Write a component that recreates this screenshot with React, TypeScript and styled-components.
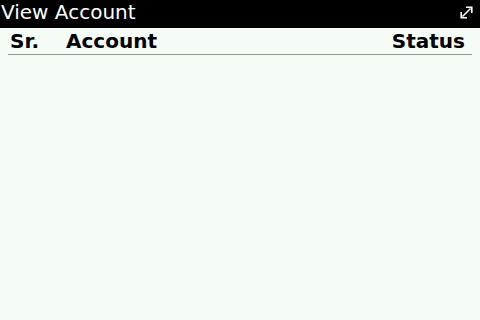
import React from 'react';
import styled, { createGlobalStyle } from 'styled-components';

const GlobalStyle = createGlobalStyle`
  html, body {
    margin: 0;
    padding: 0;
    background: #f5fbf5;
  }
  body {
    font-family: "DejaVu Sans", "Liberation Sans", sans-serif;
  }
`;

const Screen = styled.div`
  width: 480px;
  height: 320px;
  display: flex;
  flex-direction: column;
  background: #f5fbf5;
  overflow: hidden;
`;

const TitleBar = styled.div`
  height: 28px;
  background: #000;
  color: #fff;
  display: flex;
  align-items: center;
  justify-content: space-between;
  padding: 0 7px 0 1px;
`;

const Title = styled.div`
  font-size: 20px;
  line-height: 24px;
  margin-top: -4px;
`;

const ExpandIcon = styled.svg`
  width: 13px;
  height: 13px;
  margin-top: -3px;
`;

const Table = styled.div`
  padding: 0 8px;
`;

const HeaderRow = styled.div`
  display: grid;
  grid-template-columns: 56px 1fr auto;
  align-items: center;
  height: 26px;
  border-bottom: 1px solid #8c9a8c;
  font-weight: bold;
  font-size: 20px;
  color: #000;
`;

const HeaderCell = styled.div<{ align?: string }>`
  padding-left: ${({ align }) => (align === 'right' ? '0' : '2px')};
  padding-right: ${({ align }) => (align === 'right' ? '7px' : '0')};
  text-align: ${({ align }) => align || 'left'};
  line-height: 24px;
  margin-top: -1px;
`;

export default function App() {
  return (
    <>
      <GlobalStyle />
      <Screen>
        <TitleBar>
          <Title>View Account</Title>
          <ExpandIcon viewBox="0 0 13 13">
            <path d="M2.5 10.5 L10.5 2.5" stroke="#fff" strokeWidth="1.6" fill="none" />
            <path d="M6 1.2 H11.8 V7" stroke="#fff" strokeWidth="1.6" fill="none" />
            <path d="M1.2 6 V11.8 H7" stroke="#fff" strokeWidth="1.6" fill="none" />
          </ExpandIcon>
        </TitleBar>
        <Table>
          <HeaderRow>
            <HeaderCell>Sr.</HeaderCell>
            <HeaderCell>Account</HeaderCell>
            <HeaderCell align="right">Status</HeaderCell>
          </HeaderRow>
        </Table>
      </Screen>
    </>
  );
}
